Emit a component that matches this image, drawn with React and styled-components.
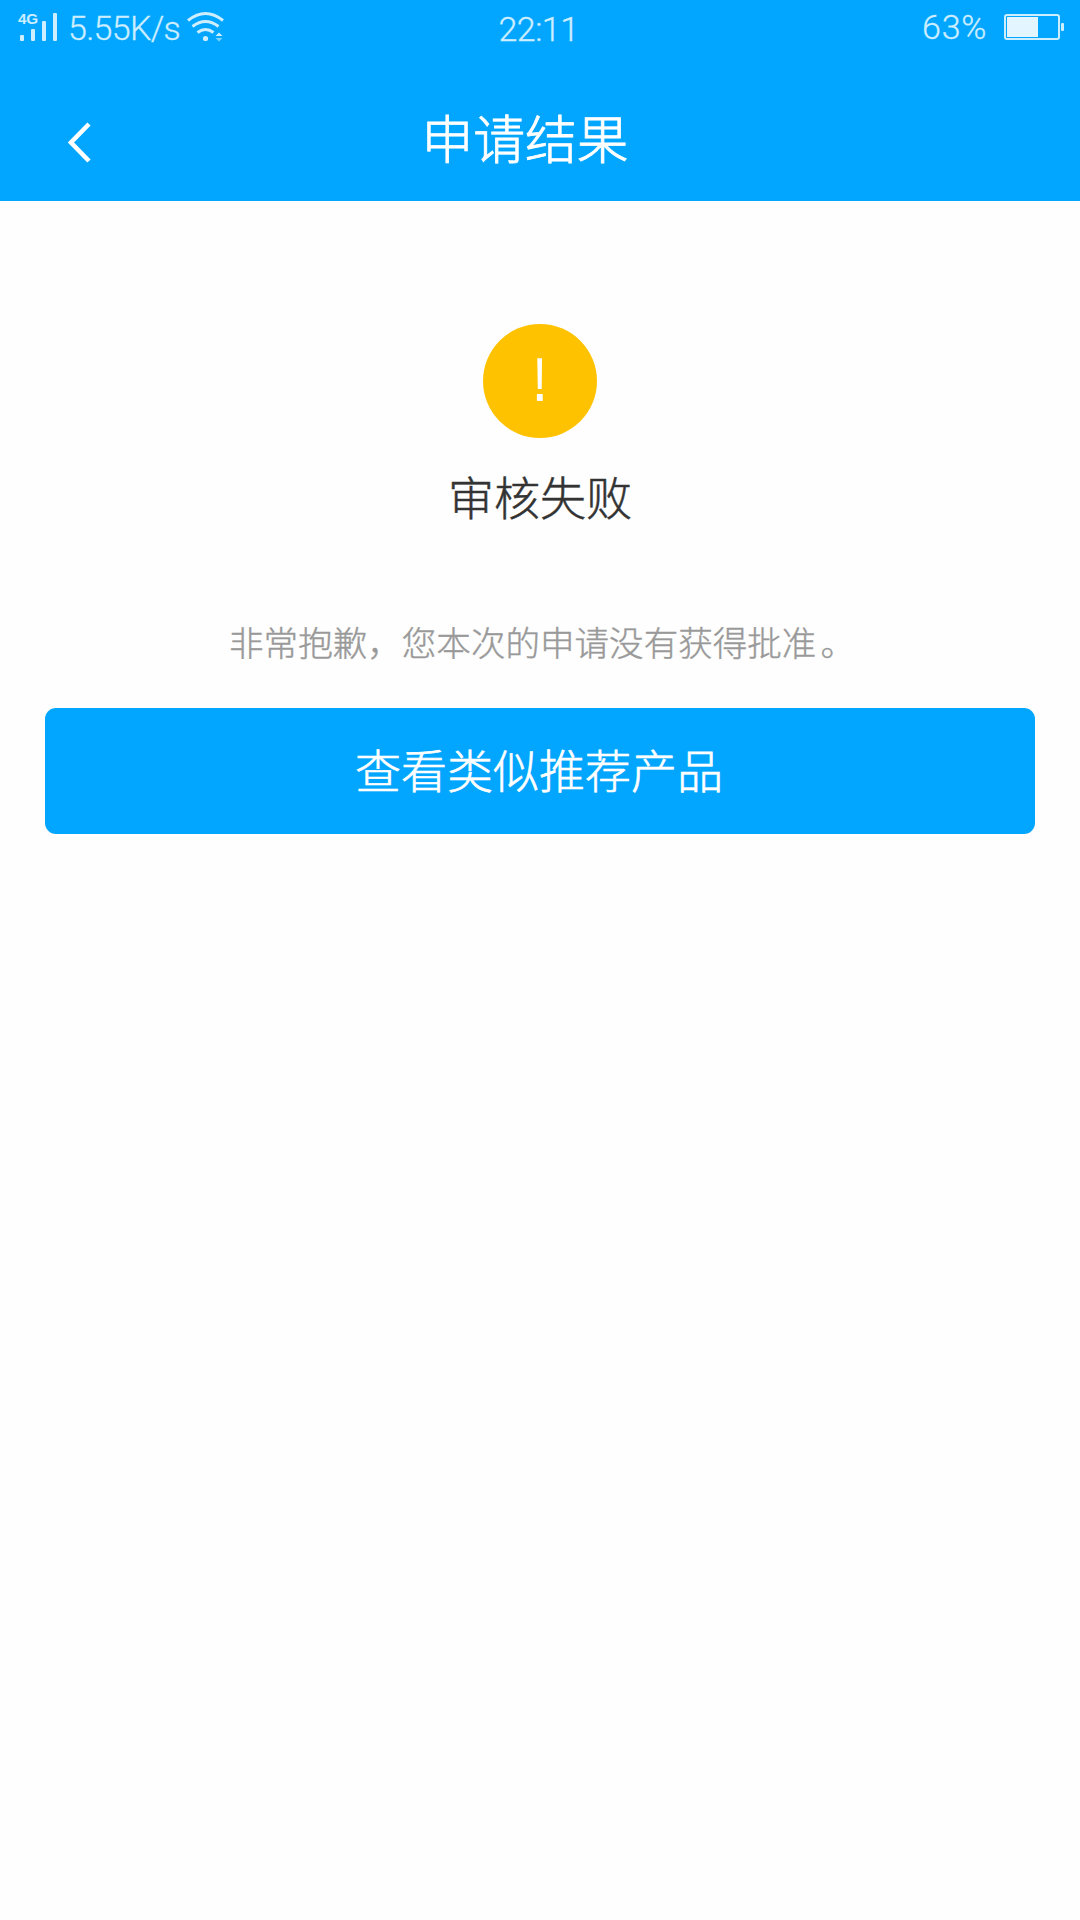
import React from 'react';
import styled, { createGlobalStyle } from 'styled-components';

const GlobalStyle = createGlobalStyle`
  * {
    box-sizing: border-box;
  }

  body {
    margin: 0;
    background: #fefefe;
    font-family: 'Noto Sans CJK SC', sans-serif;
    font-weight: 300;
  }
`;

const Screen = styled.div`
  min-height: 1920px;
  background: #fefefe;
`;

const Top = styled.header`
  height: 201px;
  background: #02a6ff;
  color: white;
`;

const StatusBar = styled.div`
  display: grid;
  grid-template-columns: 1fr auto 1fr;
  height: 56px;
  padding: 0 16px 0 18px;
  color: #cdeeff;
  font-family: Roboto, sans-serif;
`;

const StatusGroup = styled.div`
  display: flex;
  justify-content: ${props => (props.$end ? 'flex-end' : 'flex-start')};
  align-items: flex-start;

  svg {
    display: block;
    flex: none;
  }
`;

const StatusText = styled.span`
  width: ${props => props.$width}px;
  margin-left: ${props => props.$left || 0}px;
  padding-top: ${props => props.$top}px;
  font-size: 34px;
  line-height: 40px;
  letter-spacing: ${props => props.$spacing || 0}px;
  white-space: nowrap;
  -webkit-text-stroke: 0.3px;
`;

const Network = styled.div`
  display: grid;
  grid-template-areas: 'stack';
  width: 40px;
  height: 56px;

  > * {
    grid-area: stack;
  }
`;

const NetworkType = styled.span`
  padding-top: 11px;
  font: bold 15.3px/16px 'Liberation Sans', sans-serif;
  letter-spacing: -0.2px;
`;

const NavBar = styled.div`
  display: grid;
  grid-template-columns: 92px 1fr 122px;
  height: 145px;
`;

const Back = styled.button`
  display: flex;
  justify-content: flex-end;
  height: 145px;
  padding: 66px 0 0;
  border: 0;
  background: none;
  color: white;
`;

const Title = styled.h1`
  margin: 0;
  font-size: 51.8px;
  font-weight: 300;
  line-height: 161px;
  text-align: center;
  white-space: nowrap;
  -webkit-text-stroke: 0.8px;
`;

const Result = styled.main`
  display: flex;
  flex-direction: column;
  align-items: center;
  padding: 123px 45px 0;
`;

const Message = styled.h2`
  margin: 22px 0 0;
  color: #333;
  font-size: 46px;
  font-weight: 300;
  line-height: 70px;
  -webkit-text-stroke: 0.5px;
`;

const Description = styled.p`
  margin: 86px 0 0;
  color: #999;
  font-size: 34.56px;
  line-height: 50px;
  white-space: nowrap;
  -webkit-text-stroke: 0.4px;
`;

const FullStop = styled.span`
  margin: 0 -4px 0 4px;
`;

const Button = styled.button`
  width: 100%;
  height: 126px;
  margin-top: 42px;
  padding: 0 2px 6px 0;
  border: 0;
  border-radius: 11px;
  background: #02a6ff;
  color: white;
  font-family: inherit;
  font-size: 46px;
  font-weight: 300;
  line-height: 120px;
  -webkit-text-stroke: 0.6px;
`;

function SignalIcon() {
  return (
    <svg width="40" height="56" fill="currentColor">
      <rect x="2" y="35" width="4" height="6" rx="1" />
      <rect x="13" y="29" width="4" height="12" rx="1" />
      <rect x="24" y="21" width="4" height="20" rx="1" />
      <rect x="35" y="13" width="4" height="28" rx="1" />
    </svg>
  );
}

function WifiIcon() {
  return (
    <svg width="38" height="56" fill="none" stroke="currentColor" strokeWidth="3">
      <path d="M1 20.5 Q18.5 6.5 36 20.5" />
      <path d="M5.5 26.5 Q18.5 16.500 31.500 26.500" />
      <path d="M10.500 32.500 Q18.500 26.500 26.500 32.500" />
      <circle cx="18.500" cy="38.500" r="2.600" fill="currentColor" stroke="none" />
      <path d="M28.500 36 L32 32.500 L35.500 36 Z" fill="currentColor" stroke="none" />
      <path d="M28.500 38 H35.500 L32 41.500 Z" fill="currentColor" stroke="none" opacity="0.6" />
    </svg>
  );
}

function BatteryIcon() {
  return (
    <svg width="60" height="56" fill="none">
      <rect x="1" y="15" width="54" height="24" rx="2" stroke="#cdeeff" strokeWidth="2" />
      <rect x="3" y="17" width="31" height="20" fill="#e3f5ff" />
      <rect x="57" y="23" width="3" height="8" rx="1" fill="#cdeeff" />
    </svg>
  );
}

function BackIcon() {
  return (
    <svg width="24" height="42" fill="none" stroke="currentColor" strokeWidth="4.5">
      <path d="M21 2 L3 20.5 L21 39" />
    </svg>
  );
}

function WarningIcon() {
  return (
    <svg width="114" height="114">
      <circle cx="57" cy="57" r="57" fill="#ffc201" />
      <path d="M54.300 34.300 H59 L58.700 65 H54.800 Z" fill="white" />
      <rect x="53.900" y="70" width="5.800" height="7" fill="white" />
    </svg>
  );
}

export default function App() {
  return (
    <Screen>
      <GlobalStyle />
      <Top>
        <StatusBar>
          <StatusGroup>
            <Network>
              <NetworkType>4G</NetworkType>
              <SignalIcon />
            </Network>
            <StatusText $left={10} $top={8} $width={119} $spacing={-0.7}>
              5.55K/s
            </StatusText>
            <WifiIcon />
          </StatusGroup>
          <StatusText $top={9} $width={85} $spacing={-0.5}>
            22:11
          </StatusText>
          <StatusGroup $end>
            <StatusText $top={7} $width={82} $spacing={0.8}>
              63%
            </StatusText>
            <BatteryIcon />
          </StatusGroup>
        </StatusBar>
        <NavBar>
          <Back aria-label="返回">
            <BackIcon />
          </Back>
          <Title>申请结果</Title>
        </NavBar>
      </Top>
      <Result>
        <WarningIcon />
        <Message>审核失败</Message>
        <Description>
          非常抱歉，您本次的申请没有获得批准<FullStop>。</FullStop>
        </Description>
        <Button>查看类似推荐产品</Button>
      </Result>
    </Screen>
  );
}
